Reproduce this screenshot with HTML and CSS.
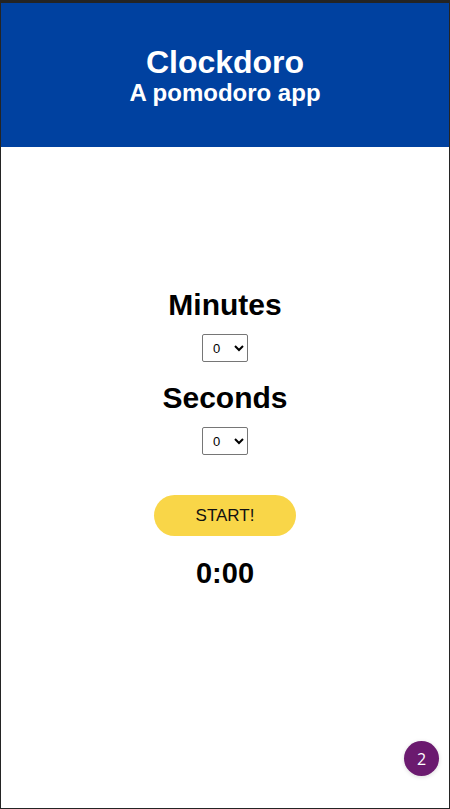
FILE: index.html
```html
<!DOCTYPE html>
<html lang="en">
<head>
<meta charset="utf-8">
<title>Clockdoro</title>
<link rel="stylesheet" href="styles.css">
</head>
<body>
<div class="frame">
  <header class="header">
    <h1 class="title">Clockdoro</h1>
    <h2 class="subtitle">A pomodoro app</h2>
  </header>
  <main class="main">
    <h3 class="label">Minutes</h3>
    <select class="picker"><option>0</option></select>
    <h3 class="label label-second">Seconds</h3>
    <select class="picker"><option>0</option></select>
    <button class="start">START!</button>
    <div class="timer">0:00</div>
  </main>
  <div class="badge">2</div>
</div>
</body>
</html>
```

FILE: styles.css
```css
html, body {
  margin: 0;
  padding: 0;
  background: #ffffff;
}
body {
  font-family: "Liberation Sans", Arial, sans-serif;
}
.frame {
  position: relative;
  width: 450px;
  height: 809px;
  box-sizing: border-box;
  border-top: 3px solid #242424;
  border-left: 1px solid #242424;
  border-right: 1px solid #242424;
  border-bottom: 1px solid #242424;
  display: flex;
  flex-direction: column;
}
.header {
  height: 144px;
  background: #0041a0;
  color: #ffffff;
  display: flex;
  flex-direction: column;
  align-items: center;
  justify-content: center;
  padding-top: 2px;
  box-sizing: border-box;
}
.title {
  margin: 0;
  font-size: 32px;
  line-height: 34px;
  font-weight: bold;
}
.subtitle {
  margin: 0;
  font-size: 24px;
  line-height: 28px;
  font-weight: bold;
}
.main {
  flex: 1;
  display: flex;
  flex-direction: column;
  align-items: center;
  padding-top: 141px;
}
.label {
  margin: 0;
  font-size: 30px;
  line-height: 34px;
  font-weight: bold;
  color: #000;
}
.picker {
  margin-top: 12px;
  width: 46px;
  height: 28px;
  font-family: "Liberation Sans", Arial, sans-serif;
  font-size: 13px;
  border: 1px solid #767676;
  border-radius: 2px;
  background: #fff;
  color: #000;
  padding: 0 0 0 6px;
}
.label-second {
  margin-top: 19px;
}
.start {
  margin-top: 40px;
  width: 142px;
  height: 41px;
  border: none;
  border-radius: 21px;
  background: #f9d648;
  font-family: "Liberation Sans", Arial, sans-serif;
  font-size: 17px;
  color: #111;
  cursor: pointer;
}
.timer {
  margin-top: 20px;
  font-size: 29px;
  line-height: 34px;
  font-weight: bold;
  color: #000;
}
.badge {
  position: absolute;
  right: 10px;
  bottom: 32px;
  width: 35px;
  height: 35px;
  border-radius: 50%;
  background: #6b1a6f;
  color: #fff;
  font-family: "Open Sans", sans-serif;
  font-size: 16px;
  display: flex;
  align-items: center;
  justify-content: center;
  box-shadow: 0 1px 4px rgba(0,0,0,0.15);
}
```
